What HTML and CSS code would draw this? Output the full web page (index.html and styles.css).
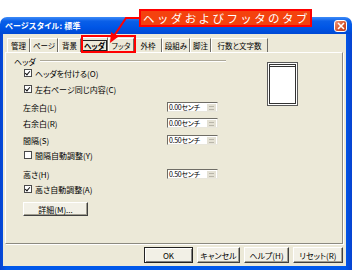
FILE: index.html
```html
<!DOCTYPE html>
<html lang="ja">
<head>
  <meta charset="UTF-8" />
  <title>ページスタイル: 標準</title>
  <link rel="stylesheet" href="styles.css">
</head>
<body>
  <div class="note">ヘッダおよびフッタのタブ</div>
  <svg class="note-arrow" width="46" height="40" viewBox="0 0 46 40">
    <polyline points="40,8 26,8 14,26" fill="none" stroke="#ff0000" stroke-width="2"/>
    <polygon points="10,33 18,27 11,22" fill="#ff0000"/>
  </svg>
  <div class="tab-mark"></div>

  <div class="window">
    <div class="titlebar">
      <span class="title">ページスタイル: 標準</span>
      <span class="close">
        <svg width="8" height="8" viewBox="0 0 8 8"><path d="M1 1L7 7M7 1L1 7" stroke="#fff" stroke-width="1.6"/></svg>
      </span>
    </div>
    <div class="frame">
      <div class="client">
        <ul class="tabs">
          <li>管理</li>
          <li>ページ</li>
          <li>背景</li>
          <li class="active"><span>ヘッダ</span></li>
          <li>フッタ</li>
          <li>外枠</li>
          <li>段組み</li>
          <li>脚注</li>
          <li>行数と文字数</li>
        </ul>

        <div class="panel">
          <div class="form">
            <div class="group">ヘッダ<span class="group-line"></span></div>

            <div class="check-row r-cb1"><span class="box checked"></span>ヘッダを付ける(O)</div>
            <div class="check-row r-cb2"><span class="box checked"></span>左右ページ同じ内容(C)</div>

            <div class="field-row r-left"><span class="label">左余白(L)</span><span class="spin">0.00センチ<i></i></span></div>
            <div class="field-row r-right"><span class="label">右余白(R)</span><span class="spin">0.00センチ<i></i></span></div>
            <div class="field-row r-gap"><span class="label">間隔(S)</span><span class="spin">0.50センチ<i></i></span></div>
            <div class="check-row r-cb3"><span class="box"></span>間隔自動調整(Y)</div>
            <div class="field-row r-height"><span class="label">高さ(H)</span><span class="spin">0.50センチ<i></i></span></div>
            <div class="check-row r-cb4"><span class="box checked"></span>高さ自動調整(A)</div>

            <button class="btn btn-more">詳細(M)...</button>
          </div>
          <div class="preview"><div class="page"></div></div>
        </div>

        <div class="buttons">
          <button class="btn btn-ok">OK</button>
          <button class="btn btn-cancel">キャンセル</button>
          <button class="btn btn-help">ヘルプ(H)</button>
          <button class="btn btn-reset">リセット(R)</button>
        </div>
      </div>
    </div>
  </div>
</body>
</html>
```

FILE: styles.css
```css
body {
  margin: 0;
  width: 352px;
  height: 270px;
  overflow: hidden;
  position: relative;
  background-color: #fff;
  font-family: "Noto Sans CJK JP", "Noto Sans", sans-serif;
  font-size: 8px;
  font-feature-settings: "palt";
  color: #000;
}
.note {
  position: absolute;
  left: 139px;
  top: 9px;
  width: 173px;
  height: 18px;
  box-sizing: border-box;
  border: 2px solid #ff0000;
  background-color: #f4420e;
  color: #fff;
  font-size: 11.5px;
  font-feature-settings: normal;
  line-height: 14px;
  letter-spacing: 2.4px;
  padding-left: 2px;
  z-index: 10;
}
.note-arrow {
  position: absolute;
  left: 100px;
  top: 10px;
  z-index: 10;
}
.tab-mark {
  position: absolute;
  left: 81px;
  top: 35px;
  width: 55px;
  height: 18px;
  box-sizing: border-box;
  border: 2px solid #ff0000;
  z-index: 9;
}
.window {
  margin-top: 17px;
  height: 253px;
  display: flex;
  flex-direction: column;
}
.titlebar {
  height: 17px;
  flex-shrink: 0;
  display: flex;
  align-items: center;
  justify-content: space-between;
  padding: 0 5px;
  border-radius: 7px 7px 0 0;
  background: linear-gradient(#3d8bf8, #0a5fe8 25%, #0056e6 60%, #0049d4);
}
.title {
  color: #fff;
  font-weight: bold;
  font-size: 8px;
  letter-spacing: 0.2px;
}
.close {
  width: 13px;
  height: 12px;
  box-sizing: border-box;
  border: 1px solid #fff;
  border-radius: 3px;
  background: linear-gradient(135deg, #f09a7e, #d4542c 55%, #c0401c);
  display: flex;
  align-items: center;
  justify-content: center;
  margin-top: 1px;
}
.frame {
  flex: 1;
  display: flex;
  padding: 0 6px 4px 3px;
  background: linear-gradient(to right, #0843d0, #0058ea 2%, #0058ea 98%, #0843d0);
}
.client {
  flex: 1;
  display: flex;
  flex-direction: column;
  background-color: #ece9d8;
  padding: 3px 2px 3px 2px;
}
.tabs {
  list-style: none;
  margin: 0 0 0 2px;
  padding: 0;
  height: 15px;
  display: flex;
  align-items: flex-end;
  position: relative;
  z-index: 2;
  font-size: 7.5px;
}
.tabs li {
  height: 14px;
  line-height: 14px;
  padding: 0;
  text-align: center;
  border-left: 1px solid #fff;
  border-top: 1px solid #fff;
  border-right: 1px solid #6f6d66;
  box-sizing: border-box;
  white-space: nowrap;
  flex-shrink: 0;
}
.tabs li:nth-child(1) { width: 23px; }
.tabs li:nth-child(2) { width: 28px; }
.tabs li:nth-child(3) { width: 23px; }
.tabs li:nth-child(4) { width: 27px; }
.tabs li:nth-child(5) { width: 26px; }
.tabs li:nth-child(6) { width: 28px; }
.tabs li:nth-child(7) { width: 28px; }
.tabs li:nth-child(8) { width: 21px; }
.tabs li:nth-child(9) { width: 57px; }
.tabs li.active {
  height: 16px;
  margin-bottom: -1px;
  font-weight: bold;
  background-color: #ece9d8;
  display: flex;
  align-items: center;
  justify-content: center;
}
.tabs li.active span {
  border: 1px solid #222;
  line-height: 9px;
  padding: 0 1px;
}
.panel {
  height: 192px;
  box-sizing: border-box;
  margin-right: 1px;
  border: 1px solid;
  border-color: #fff #8c8a80 #8c8a80 #fff;
  box-shadow: 1px 1px 0 #fff;
  display: flex;
  padding: 3px 0 0 8px;
}
.form {
  width: 212px;
  display: flex;
  flex-direction: column;
}
.group {
  height: 10px;
  display: flex;
  align-items: center;
}
.group-line {
  flex: 1;
  height: 0;
  margin-left: 4px;
  border-top: 1px solid #aca899;
  border-bottom: 1px solid #fff;
}
.check-row {
  height: 10px;
  display: flex;
  align-items: center;
  padding-left: 10px;
}
.box {
  width: 8px;
  height: 8px;
  box-sizing: border-box;
  border: 1px solid #4a4a4a;
  background-color: #fff;
  margin-right: 3px;
  position: relative;
}
.box.checked::after {
  content: "";
  position: absolute;
  left: 1px;
  top: 0;
  width: 2px;
  height: 4px;
  border: solid #111;
  border-width: 0 1.5px 1.5px 0;
  transform: rotate(40deg);
}
.field-row {
  height: 12px;
  display: flex;
  align-items: center;
  padding-left: 9px;
}
.label {
  width: 144px;
}
.spin {
  width: 51px;
  height: 10px;
  box-sizing: border-box;
  background-color: #fff;
  border: 1px solid;
  border-color: #6f6d66 #e8e6dc #e8e6dc #6f6d66;
  display: flex;
  align-items: center;
  justify-content: space-between;
  padding-left: 1px;
  font-size: 7px;
  letter-spacing: -0.3px;
}
.spin i {
  width: 9px;
  height: 7px;
  margin-right: 1px;
  background:
    linear-gradient(#b9b6aa, #b9b6aa) 2px 2px / 5px 1px no-repeat,
    linear-gradient(#b9b6aa, #b9b6aa) 2px 5px / 5px 1px no-repeat,
    #e4e1d4;
}
.r-cb1 { margin-top: 2px; }
.r-cb2 { margin-top: 6px; }
.r-left { margin-top: 7px; }
.r-right { margin-top: 4px; }
.r-gap { margin-top: 5px; }
.r-cb3 { margin-top: 4px; }
.r-height { margin-top: 8px; }
.r-cb4 { margin-top: 4px; }
.btn {
  font-family: inherit;
  font-size: 8px;
  font-feature-settings: "palt";
  color: #000;
  height: 16px;
  padding: 0;
  box-sizing: border-box;
  background-color: #f2f0e6;
  border: 1px solid;
  border-color: #fff #404040 #404040 #fff;
  box-shadow: inset -1px -1px 0 #a19e90;
}
.btn-more {
  margin: 8px 0 0 9px;
  width: 65px;
  height: 14px;
}
.preview {
  margin: 6px 0 0 41px;
  width: 31px;
  height: 44px;
  box-sizing: border-box;
  border: 1px solid #5a5a5a;
  background-color: #fff;
  padding: 1px;
}
.page {
  height: 100%;
  box-sizing: border-box;
  border: 1px solid #333;
  border-top: 3px double #333;
  background-color: #fff;
}
.buttons {
  margin-top: 3px;
  display: flex;
  justify-content: flex-end;
  gap: 4px;
  padding-right: 1px;
}
.btn-ok {
  width: 49px;
  border-color: #222;
  box-shadow: inset 1px 1px 0 #fff, inset -1px -1px 0 #808080;
}
.btn-cancel { width: 43px; }
.btn-help { width: 45px; }
.btn-reset { width: 50px; }
```
